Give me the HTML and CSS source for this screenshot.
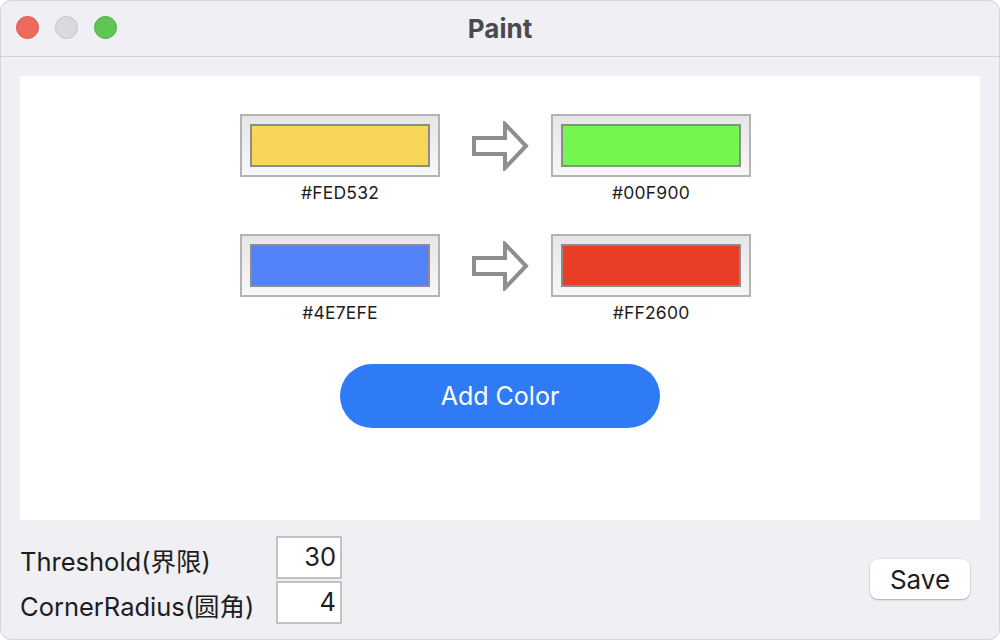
FILE: index.html
```html
<!DOCTYPE html>
<html lang="en">
<head>
<meta charset="utf-8">
<title>Paint</title>
<link rel="stylesheet" href="styles.css">
</head>
<body>
<div class="window">
  <header class="titlebar">
    <div class="lights">
      <span class="light red"></span>
      <span class="light gray"></span>
      <span class="light green"></span>
    </div>
    <div class="title">Paint</div>
  </header>
  <main class="panel">
    <div class="pair">
      <div class="swatch-col">
        <div class="swatch"><div class="fill yellow"></div></div>
        <div class="hex">#FED532</div>
      </div>
      <div class="arrow">
        <svg width="58" height="50" viewBox="0 0 58 50"><polygon points="3,17 34,17 34,3 55,25 34,47 34,33 3,33" fill="none" stroke="#8e8e8e" stroke-width="4" stroke-linejoin="miter"/></svg>
      </div>
      <div class="swatch-col">
        <div class="swatch"><div class="fill green"></div></div>
        <div class="hex">#00F900</div>
      </div>
    </div>
    <div class="pair">
      <div class="swatch-col">
        <div class="swatch"><div class="fill blue"></div></div>
        <div class="hex">#4E7EFE</div>
      </div>
      <div class="arrow">
        <svg width="58" height="50" viewBox="0 0 58 50"><polygon points="3,17 34,17 34,3 55,25 34,47 34,33 3,33" fill="none" stroke="#8e8e8e" stroke-width="4" stroke-linejoin="miter"/></svg>
      </div>
      <div class="swatch-col">
        <div class="swatch"><div class="fill red"></div></div>
        <div class="hex">#FF2600</div>
      </div>
    </div>
    <div class="actions">
      <button class="add-btn">Add Color</button>
    </div>
  </main>
  <footer class="footer">
    <div class="fields">
      <div class="field">
        <span class="label">Threshold(界限)</span>
        <span class="input">30</span>
      </div>
      <div class="field">
        <span class="label">CornerRadius(圆角)</span>
        <span class="input">4</span>
      </div>
    </div>
    <button class="save-btn">Save</button>
  </footer>
</div>
</body>
</html>
```

FILE: styles.css
```css
html, body {
  margin: 0;
  padding: 0;
  background: #ffffff;
}
body {
  width: 1000px;
  height: 640px;
  overflow: hidden;
  font-family: Inter, "Noto Sans CJK SC", sans-serif;
}
.window {
  width: 1000px;
  height: 640px;
  box-sizing: border-box;
  background: #efeff4;
  border-radius: 11px;
  border: 1px solid #d6d6da;
  overflow: hidden;
  display: flex;
  flex-direction: column;
}
.titlebar {
  height: 55px;
  flex: none;
  border-bottom: 1px solid #d3d3d6;
  position: relative;
  display: flex;
  align-items: center;
  justify-content: center;
}
.lights {
  position: absolute;
  left: 15px;
  top: 15px;
  display: flex;
  gap: 16px;
}
.light {
  width: 23px;
  height: 23px;
  border-radius: 50%;
  box-sizing: border-box;
}
.light.red { background: #ee6a5e; border: 1px solid #d9574d; }
.light.gray { background: #d9d9de; border: 1px solid #c3c3c8; }
.light.green { background: #60c554; border: 1px solid #4fae44; }
.title {
  font-size: 26px;
  font-weight: 700;
  color: #4a4a4d;
  margin-top: -1px;
}
.panel {
  margin: 19px 19px 0 19px;
  height: 444px;
  background: #ffffff;
  box-sizing: border-box;
  padding: 38px 0 0 220px;
  display: flex;
  flex-direction: column;
}
.pair {
  display: flex;
  align-items: flex-start;
  margin-bottom: 31px;
}
.swatch-col {
  width: 200px;
  display: flex;
  flex-direction: column;
  align-items: center;
}
.swatch {
  width: 200px;
  height: 63px;
  box-sizing: border-box;
  border: 2px solid #b3b3b3;
  background: linear-gradient(#e6e6e6, #f7f7f7);
  padding: 8px;
}
.fill {
  width: 100%;
  height: 100%;
  box-sizing: border-box;
  border: 2px solid #8c8c8c;
}
.fill.yellow { background: #f8d657; }
.fill.green { background: #74f54f; }
.fill.blue { background: #5381f7; }
.fill.red { background: #e93e25; }
.hex {
  margin-top: 6px;
  font-size: 17.5px;
  line-height: 20px;
  color: #1d1d1f;
  letter-spacing: 0.2px;
}
.arrow {
  width: 111px;
  height: 63px;
  display: flex;
  align-items: center;
  justify-content: center;
  padding-left: 8px;
  box-sizing: border-box;
}
.actions {
  width: 520px;
  display: flex;
  justify-content: center;
  margin-top: 10px;
}
.add-btn {
  width: 320px;
  height: 64px;
  border: none;
  border-radius: 32px;
  background: #2f7bf6;
  color: #ffffff;
  font-family: Inter, sans-serif;
  font-size: 25px;
  padding: 0;
}
.footer {
  flex: 1;
  display: flex;
  align-items: flex-start;
  justify-content: space-between;
  padding: 16px 29px 0 19px;
}
.fields {
  display: flex;
  flex-direction: column;
  gap: 2px;
}
.field {
  display: flex;
  align-items: center;
}
.label {
  width: 256px;
  font-size: 25.5px;
  color: #1d1d1f;
  padding-top: 3px;
}
.input {
  width: 66px;
  height: 43px;
  box-sizing: border-box;
  border: 2px solid #c2c2c2;
  background: #ffffff;
  font-size: 25.5px;
  text-align: right;
  padding-right: 4px;
  line-height: 38px;
  color: #1d1d1f;
}
.save-btn {
  margin-top: 23px;
  width: 100px;
  height: 40px;
  border: none;
  border-radius: 8px;
  background: #ffffff;
  box-shadow: 0 1px 2px rgba(0,0,0,0.25), 0 0 0 0.5px rgba(0,0,0,0.08);
  font-family: Inter, sans-serif;
  font-size: 26px;
  color: #1d1d1f;
  padding: 0;
}
```
